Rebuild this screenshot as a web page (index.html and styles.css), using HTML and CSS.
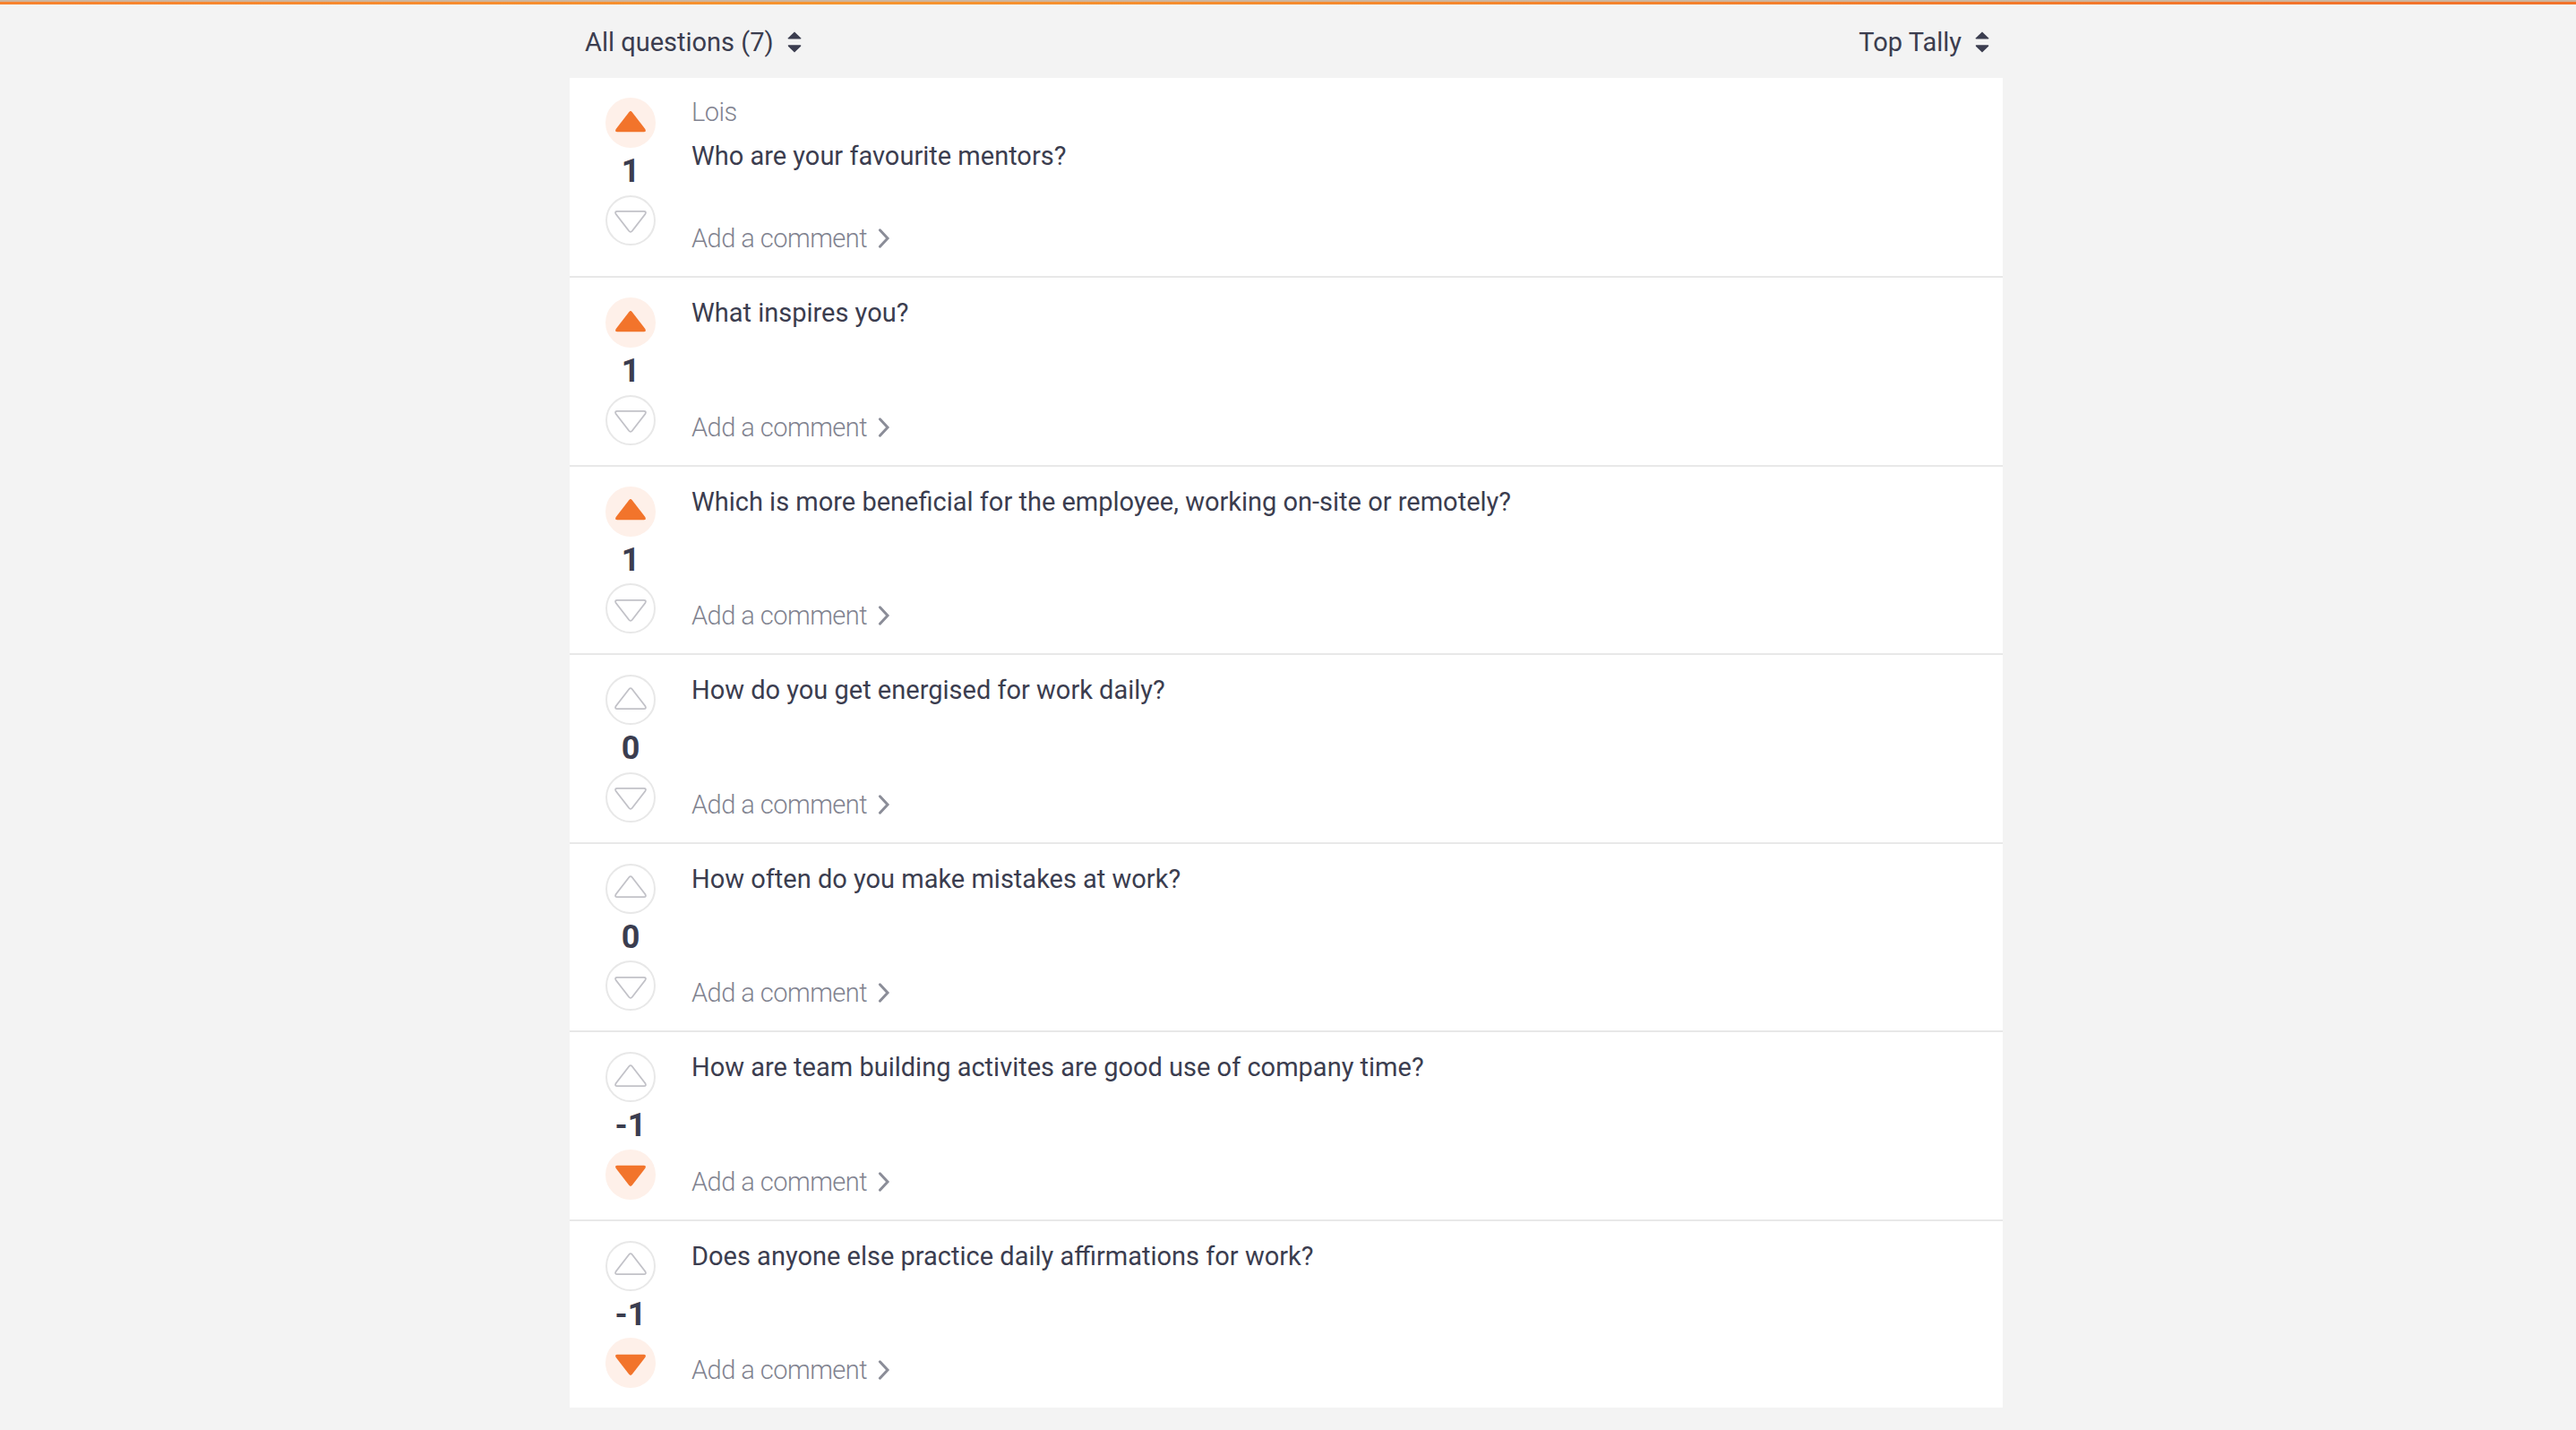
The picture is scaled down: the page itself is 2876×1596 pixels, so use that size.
FILE: index.html
```html
<!DOCTYPE html>
<html lang="en">
<head>
    <meta charset="UTF-8">
    <meta name="viewport" content="width=device-width, initial-scale=1.0">
    <title>Questions</title>
    <link rel="stylesheet" href="styles.css">
</head>
<body>
    <!-- shared icons -->
    <svg class="sprite" aria-hidden="true">
        <symbol id="up" viewBox="0 0 36 26">
            <path d="M16.2 2.2 Q18 0 19.8 2.2 L34.3 21 Q36 24.2 32.8 24.2 L3.2 24.2 Q0 24.2 1.7 21 Z"/>
        </symbol>
        <symbol id="chevron" viewBox="0 0 14 24">
            <path d="M2.4 2.8 L11 12 L2.4 21.2"/>
        </symbol>
        <symbol id="sort" viewBox="0 0 16 24">
            <path d="M8 0.5 L15 7.3 Q16 8.5 14.5 8.5 L1.5 8.5 Q0 8.5 1 7.3 Z"/>
            <path d="M8 23.5 L15 16.7 Q16 15.2 14.5 15.2 L1.5 15.2 Q0 15.2 1 16.7 Z"/>
        </symbol>
    </svg>

    <div class="top-bar"></div>
    <main>
        <div class="filters">
            <button class="filter">All questions (7) <svg class="sort"><use href="#sort"/></svg></button>
            <button class="filter">Top Tally <svg class="sort"><use href="#sort"/></svg></button>
        </div>
        <ul id="questions"></ul>
    </main>

    <script>
        const questions = [
            { author: 'Lois', text: 'Who are your favourite mentors?', tally: 1 },
            { text: 'What inspires you?', tally: 1 },
            { text: 'Which is more beneficial for the employee, working on-site or remotely?', tally: 1 },
            { text: 'How do you get energised for work daily?', tally: 0 },
            { text: 'How often do you make mistakes at work?', tally: 0 },
            { text: 'How are team building activites are good use of company time?', tally: -1 },
            { text: 'Does anyone else practice daily affirmations for work?', tally: -1 }
        ];

        document.getElementById('questions').innerHTML = questions.map(q => `
            <li class="question">
                <div class="votes">
                    <button class="vote ${q.tally > 0 ? 'active' : ''}" aria-label="Vote up"><svg><use href="#up"/></svg></button>
                    <span class="tally">${q.tally}</span>
                    <button class="vote down ${q.tally < 0 ? 'active' : ''}" aria-label="Vote down"><svg><use href="#up"/></svg></button>
                </div>
                <div class="content">
                    ${q.author ? `<div class="author">${q.author}</div>` : ''}
                    <div class="text">${q.text}</div>
                    <a class="comment">Add a comment <svg><use href="#chevron"/></svg></a>
                </div>
            </li>`).join('');
    </script>
</body>
</html>
```
FILE: styles.css
```css
* {
    box-sizing: border-box;
}
body {
    margin: 0;
    min-height: 1596px;
    background-color: #f3f3f3;
    color: #3b3d4f;
    font-family: Roboto, sans-serif;
    font-size: 29px;
}
button {
    padding: 0;
    border: none;
    background: none;
    color: inherit;
    font: inherit;
    cursor: pointer;
}
.sprite {
    display: none;
}
.top-bar {
    height: 5px;
    border-top: 2px solid #cdb49c;
    background: linear-gradient(90deg, #f7822e, #f6952f 33%, #f2732b 90%);
}
main {
    width: 1600px;
    margin-left: 636px;
}
.filters {
    display: flex;
    justify-content: space-between;
    height: 82px;
    padding: 0 15px 0 17px;
}
.filter {
    display: flex;
    align-items: center;
    gap: 15px;
    height: 83px;
}
.sort {
    width: 16px;
    height: 24px;
    fill: #3b3d4f;
}
#questions {
    margin: 0;
    padding: 0;
    list-style: none;
    background-color: #fff;
}
.question {
    display: flex;
    padding: 22px 40px;
    border-bottom: 2px solid #e8e8e8;
}
.question:last-child {
    border-bottom: none;
}
.votes {
    display: flex;
    flex-direction: column;
    align-items: center;
    width: 56px;
    margin-right: 40px;
}
.vote {
    display: flex;
    align-items: center;
    justify-content: center;
    width: 56px;
    height: 56px;
    flex-shrink: 0;
    border: 2px solid #e8e8e8;
    border-radius: 50%;
}
.vote svg {
    width: 36px;
    height: 26px;
    margin-bottom: 3px;
    fill: none;
    stroke: #c2c2c8;
    stroke-width: 1.8;
}
.vote.down svg {
    margin: 3px 0 0;
    transform: rotate(180deg);
}
.vote.active {
    border-color: #fef0e9;
    background-color: #fef0e9;
}
.vote.active svg {
    fill: #f2742b;
    stroke: none;
}
.tally {
    height: 52.5px;
    line-height: 52.5px;
    font-size: 36px;
    font-weight: 700;
}
.content {
    display: flex;
    flex-direction: column;
    flex: 1;
}
.author {
    height: 48px;
    line-height: 33px;
    color: #818390;
    font-weight: 300;
    letter-spacing: -0.5px;
}
.text {
    height: 84px;
    line-height: 34px;
}
.author + .text {
    height: 89px;
}
.comment {
    display: flex;
    align-items: center;
    gap: 12px;
    height: 40px;
    margin-top: auto;
    color: #818390;
    font-weight: 300;
    letter-spacing: -0.53px;
}
.comment svg {
    width: 14px;
    height: 24px;
    fill: none;
    stroke: #8b8d98;
    stroke-width: 3;
    stroke-linecap: round;
}
```
